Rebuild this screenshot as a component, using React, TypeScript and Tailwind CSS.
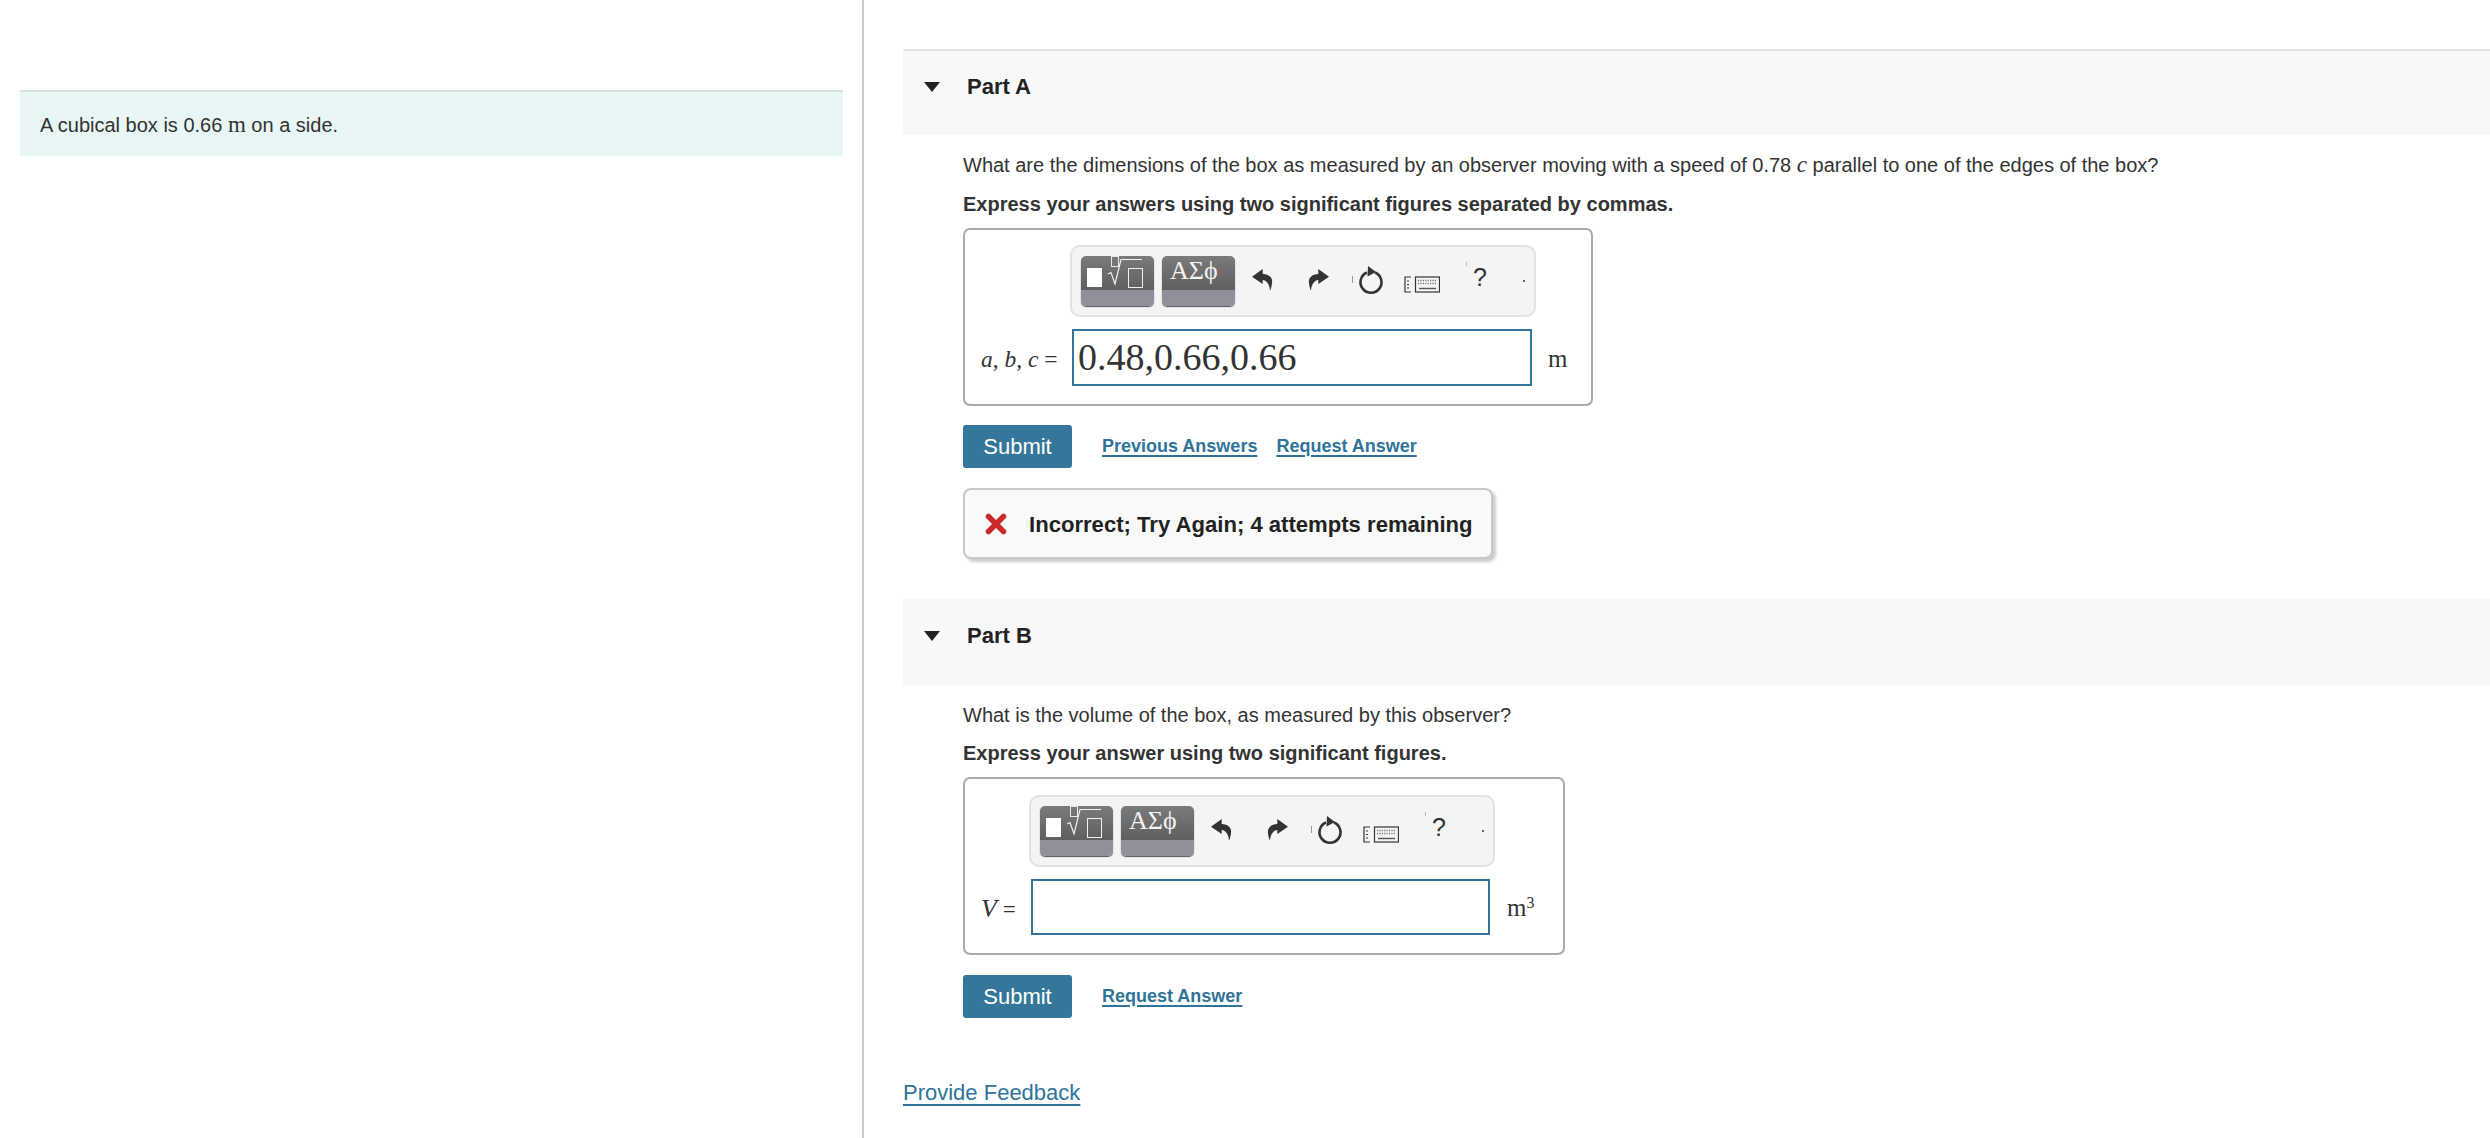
const sans = "font-['Liberation_Sans',Arial,sans-serif]";
const serif = "font-['Liberation_Serif','Times_New_Roman',serif]";

const ArrowIcon = ({ flip }: { flip?: boolean }) => (
  <svg width="21" height="22" viewBox="0 0 21 22" className={flip ? "-scale-x-100" : ""}>
    <path
      d="M0 7.7 L10.7 0 V5 C17 5 21 9 20 14 C19.7 17 19 20 18 21.7 C18 17 15 11 10.7 11 V15 Z"
      fill="#333"
    />
  </svg>
);

const ResetIcon = () => (
  <svg width="26" height="29" viewBox="0 0 26 29">
    <path d="M9 6.5 A10.5 10.5 0 1 0 17 6.5" fill="none" stroke="#333" strokeWidth="2.6" />
    <path d="M10 0 L18 6 L9.5 10.5 Z" fill="#333" />
  </svg>
);

const KeyboardIcon = () => (
  <svg width="36" height="17" viewBox="0 0 36 17">
    <path d="M7 1 H1 V16 H7" fill="none" stroke="#333" strokeWidth="1.2" />
    <rect x="11.5" y="1" width="24" height="15" fill="none" stroke="#333" strokeWidth="1.2" />
    <path d="M3 5 H5 M3 8.5 H5 M3 12 H5" stroke="#333" strokeWidth="1.2" />
    <path d="M14 4.5 H33 M14 7.5 H33" stroke="#777" strokeWidth="1.3" strokeDasharray="1.2 1.2" />
    <path d="M15 12.5 H32" stroke="#555" strokeWidth="1.4" />
  </svg>
);

const TemplateButton = () => (
  <div className="relative flex h-[50px] w-[73px] flex-col overflow-hidden rounded-[5px] shadow-[0_1px_1px_#555]">
    <div className="h-[34px] bg-gradient-to-b from-[#7b7b7b] to-[#5f5f5f]" />
    <div className="h-[16px] bg-[#90909a]" />
    <svg width="73" height="50" viewBox="0 0 73 50" className="absolute left-0 top-0">
      <rect x="6" y="12" width="15" height="19" fill="#fff" />
      <rect x="30.5" y="0.5" width="7" height="10" fill="none" stroke="#e8e8e8" />
      <path d="M27 18 L30 16.5 L34 28 L40 3.5 H61" fill="none" stroke="#f0f0f0" strokeWidth="1.2" />
      <rect x="47.5" y="12.5" width="14" height="19" fill="none" stroke="#f0f0f0" />
    </svg>
  </div>
);

const SymbolButton = () => (
  <div className="flex h-[50px] w-[73px] flex-col overflow-hidden rounded-[5px] shadow-[0_1px_1px_#555]">
    <div className={`h-[34px] bg-gradient-to-b from-[#7b7b7b] to-[#5f5f5f] pl-2 text-[26px] leading-[30px] text-[#f2f2f2] ${serif}`}>
      ΑΣϕ
    </div>
    <div className="h-[16px] bg-[#90909a]" />
  </div>
);

const Toolbar = ({ className }: { className: string }) => (
  <div className={`flex h-[72px] w-[466px] items-center rounded-[10px] border-[2px] border-[#e2e2e2] bg-[#f4f4f4] pl-[9px] ${className}`}>
    <div className="flex gap-2 self-start pt-[9px]">
      <TemplateButton />
      <SymbolButton />
    </div>
    <div className="flex w-[55px] justify-center pb-[2px]">
      <ArrowIcon />
    </div>
    <div className="flex w-[56px] justify-center pb-[2px]">
      <ArrowIcon flip />
    </div>
    <div className="relative flex w-[49px] justify-center pb-[2px]">
      <span className="absolute left-[6px] top-[10px] h-[7px] w-px bg-[#999]" />
      <ResetIcon />
    </div>
    <div className="flex w-[54px] justify-center pt-[6px]">
      <KeyboardIcon />
    </div>
    <div className={`relative flex w-[62px] justify-center pb-[9px] text-[25px] leading-[30px] text-[#333] ${sans}`}>
      <span className="absolute left-[17px] top-0 h-[4px] w-px bg-[#bbb]" />?
    </div>
    <span className="ml-[12px] h-[2px] w-[2px] bg-[#666]" />
  </div>
);

const SubmitButton = () => (
  <button className="h-[43px] w-[109px] rounded-[3px] bg-[#35779a] text-[22px] text-white">Submit</button>
);

const ActionLink = ({ children }: { children: string }) => (
  <a className="text-[18px] font-bold text-[#2f7399] underline decoration-2 underline-offset-[3px]">{children}</a>
);

const PartHeader = ({ title, className }: { title: string; className: string }) => (
  <div className={`flex h-[86px] items-center bg-[#f8f8f8] pb-[13px] pl-[21px] ${className}`}>
    <span className="h-0 w-0 border-x-[8.5px] border-t-[10px] border-x-transparent border-t-[#222]" />
    <span className="ml-[27px] text-[22px] font-bold text-[#222]">{title}</span>
  </div>
);

export default function App() {
  return (
    <div className={`flex h-[1138px] overflow-hidden bg-white text-[#333] ${sans}`}>
      <div className="w-[864px] shrink-0 border-r-2 border-[#c2c9d0] pl-[20px] pr-[19px] pt-[90px]">
        <div className="flex h-[66px] items-center border-t-2 border-[#dedede] bg-[#e8f6f6] pl-[20px] pt-[2px] text-[20px]">
          <span>
            A cubical box is 0.66 <span className={`text-[23px] ${serif}`}>m</span> on a side.
          </span>
        </div>
      </div>

      <div className="flex-1 pl-[39px] pt-[49px]">
        <PartHeader title="Part A" className="border-t-2 border-[#e2e2e2]" />
        <div className="pl-[60px]">
          <p className="mt-[15px] text-[20px] leading-[30px]">
            What are the dimensions of the box as measured by an observer moving with a speed of 0.78{" "}
            <i className={`text-[23px] ${serif}`}>c</i> parallel to one of the edges of the box?
          </p>
          <p className="mt-[9px] text-[20px] font-bold leading-[30px]">
            Express your answers using two significant figures separated by commas.
          </p>
          <div className="mt-[9px] h-[178px] w-[630px] rounded-[7px] border-2 border-[#aaaaaa] pt-[15px]">
            <Toolbar className="ml-[105px]" />
            <div className="mt-[12px] flex items-center">
              <div className={`w-[107px] pl-[16px] pt-[4px] text-[23.5px] ${serif}`}>
                <i>a</i>, <i>b</i>, <i>c</i> =
              </div>
              <div className={`h-[57px] w-[460px] border-2 border-[#33769a] pl-[4px] pt-[2px] text-[38px] leading-[48px] ${serif}`}>
                0.48,0.66,0.66
              </div>
              <span className={`ml-[16px] pt-[2px] text-[25px] ${serif}`}>m</span>
            </div>
          </div>
          <div className="mt-[19px] flex items-center">
            <SubmitButton />
            <div className="ml-[30px] flex gap-[19px] pb-[1px]">
              <ActionLink>Previous Answers</ActionLink>
              <ActionLink>Request Answer</ActionLink>
            </div>
          </div>
          <div className="mt-[20px] flex h-[71px] w-[530px] items-center rounded-[8px] border-2 border-[#c8c8c8] bg-[#f9f9f9] pl-[20px] shadow-[3px_3px_3px_#ccc]">
            <svg width="22" height="22" viewBox="0 0 22 22">
              <path d="M3.5 3.5 L18.5 18.5 M18.5 3.5 L3.5 18.5" stroke="#cc2a2a" strokeWidth="5.5" strokeLinecap="round" />
            </svg>
            <span className="ml-[22px] pt-[2px] text-[22.1px] font-bold text-[#222]">Incorrect; Try Again; 4 attempts remaining</span>
          </div>
        </div>

        <PartHeader title="Part B" className="mt-[40px]" />
        <div className="pl-[60px]">
          <p className="mt-[15px] text-[20px] leading-[30px]">What is the volume of the box, as measured by this observer?</p>
          <p className="mt-[8px] text-[20px] font-bold leading-[30px]">Express your answer using two significant figures.</p>
          <div className="mt-[9px] h-[178px] w-[602px] rounded-[7px] border-2 border-[#aaaaaa] pt-[16px]">
            <Toolbar className="ml-[64px]" />
            <div className="mt-[12px] flex items-center">
              <div className={`w-[66px] pl-[16px] pt-[2px] text-[23px] ${serif}`}>
                <i className="text-[26px]">V</i> =
              </div>
              <div className="h-[56px] w-[459px] border-2 border-[#33769a]" />
              <span className={`ml-[17px] pt-[2px] text-[25px] ${serif}`}>
                m<sup className="text-[16px]">3</sup>
              </span>
            </div>
          </div>
          <div className="mt-[20px] flex items-center">
            <SubmitButton />
            <div className="ml-[30px] flex pb-[1px]">
              <ActionLink>Request Answer</ActionLink>
            </div>
          </div>
        </div>
        <a className="mt-[60px] block text-[22px] leading-[30px] text-[#2f7399] underline underline-offset-[4px]">
          Provide Feedback
        </a>
      </div>
    </div>
  );
}
